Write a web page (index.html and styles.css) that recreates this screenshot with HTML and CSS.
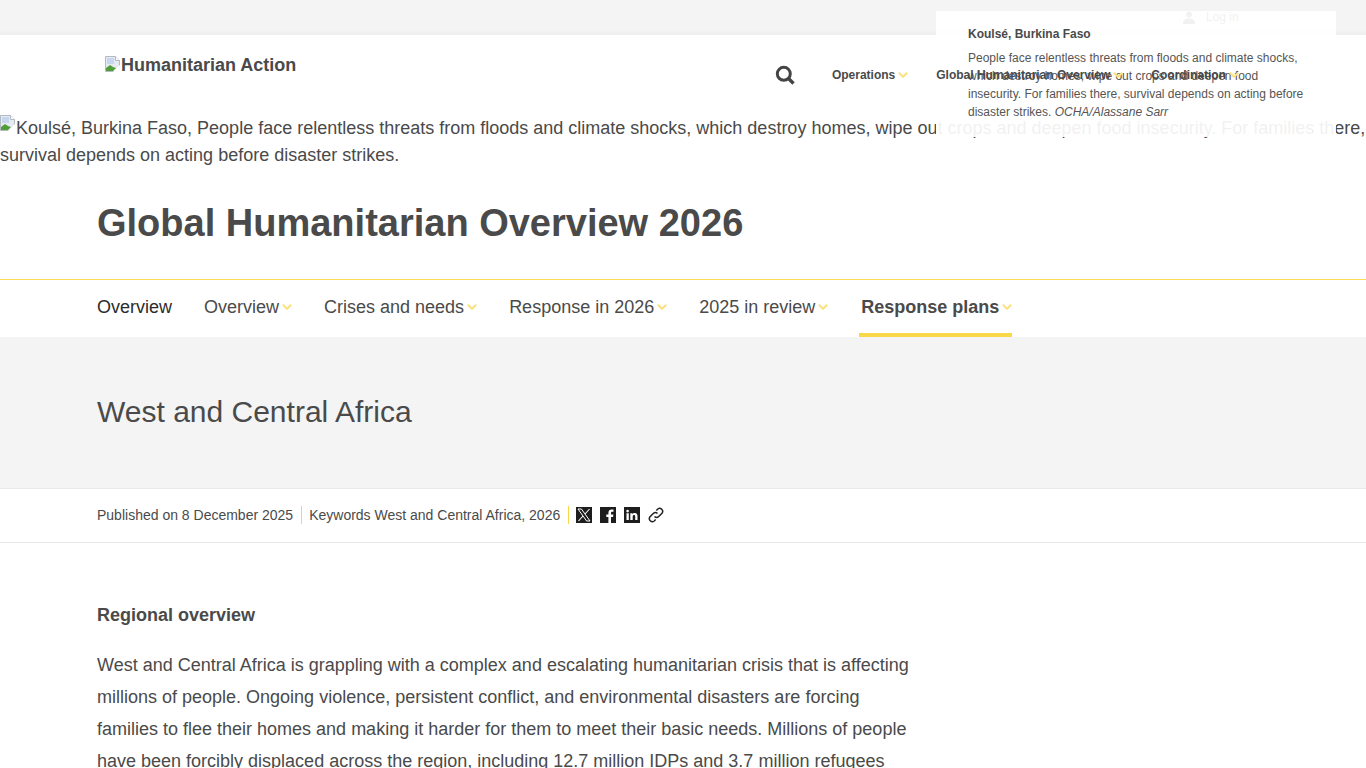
FILE: index.html
```html
<!DOCTYPE html>
<html lang="en">

<head>
    <meta charset="UTF-8" />
    <meta name="viewport" content="width=device-width, initial-scale=1.0" />
    <title>West and Central Africa | Global Humanitarian Overview 2026</title>
    <link rel="stylesheet" href="styles.css">
</head>

<body>
    <svg class="sprite" width="0" height="0" aria-hidden="true">
        <symbol id="broken" viewBox="0 0 16 16">
            <path d="M.5 .5h10l4 4v11H.5z" fill="#e6ebf2" stroke="#b4bac2" />
            <path d="M10.500 .5v4h4" fill="#fff" stroke="#b4bac2" />
            <path d="M2 2h7v6H2z" fill="#c6d6ee" />
            <path d="M1 15V12l4-3 3 2 3 1-3 3z" fill="#4f9e3a" />
            <path d="M16 8l-8 8h8z" fill="#fff" />
        </symbol>
        <symbol id="chevron" viewBox="0 0 10 6">
            <path d="M.8 .8L5 4.800 9.200 .8" fill="none" stroke="#f9e27d" stroke-width="2" />
        </symbol>
    </svg>

    <div class="topbar">
        <a class="login" href="#">
            <svg width="12" height="13" viewBox="0 0 12 13">
                <circle cx="6" cy="3.500" r="3" fill="#555" />
                <path d="M0 13c0-4 2-5.500 6-5.500s6 1.500 6 5.500z" fill="#555" />
            </svg>
            Log in
        </a>
    </div>

    <header class="site-header">
        <a class="logo" href="#"><svg class="broken-icon"><use href="#broken" /></svg>Humanitarian Action</a>
        <nav class="main-nav">
            <svg class="search-icon" width="20" height="20" viewBox="0 0 20 20">
                <circle cx="8.800" cy="8.800" r="6.500" fill="none" stroke="#444" stroke-width="3" />
                <path d="M13.500 13.500l5 5" stroke="#444" stroke-width="3.400" />
            </svg>
            <a href="#">Operations<svg class="chevron"><use href="#chevron" /></svg></a>
            <a href="#">Global Humanitarian Overview<svg class="chevron"><use href="#chevron" /></svg></a>
            <a href="#">Coordination<svg class="chevron"><use href="#chevron" /></svg></a>
        </nav>
    </header>

    <div class="hero-alt"><svg class="broken-icon"><use href="#broken" /></svg>Koulsé, Burkina Faso, People face relentless threats from floods and climate shocks, which destroy homes, wipe out crops and deepen food insecurity. For families there, survival depends on acting before disaster strikes.</div>

    <aside class="caption">
        <h4>Koulsé, Burkina Faso</h4>
        <p>People face relentless threats from floods and climate shocks, which destroy homes, wipe out crops and deepen food insecurity. For families there, survival depends on acting before disaster strikes. <em>OCHA/Alassane Sarr</em></p>
    </aside>

    <div class="page-title">
        <h1>Global Humanitarian Overview 2026</h1>
    </div>

    <nav class="sub-nav">
        <a class="first" href="#">Overview</a>
        <a href="#">Overview<svg class="chevron"><use href="#chevron" /></svg></a>
        <a href="#">Crises and needs<svg class="chevron"><use href="#chevron" /></svg></a>
        <a href="#">Response in 2026<svg class="chevron"><use href="#chevron" /></svg></a>
        <a href="#">2025 in review<svg class="chevron"><use href="#chevron" /></svg></a>
        <a class="active" href="#">Response plans<svg class="chevron"><use href="#chevron" /></svg></a>
    </nav>

    <div class="region-band">
        <h2>West and Central Africa</h2>
    </div>

    <div class="meta-row">
        <span class="meta-item">Published on 8 December 2025</span>
        <span class="meta-item">Keywords West and Central Africa, 2026</span>
        <div class="share">
            <a class="share-box" href="#" aria-label="X">
                <svg width="16" height="16" viewBox="0 0 16 16">
                    <path d="M2 2h3.400l8.600 12h-3.400z" fill="none" stroke="#fff" stroke-width="1" />
                    <path d="M13.500 2L9 7M7 9l-4.500 5" stroke="#fff" stroke-width="1.100" />
                </svg>
            </a>
            <a class="share-box" href="#" aria-label="Facebook">
                <svg width="16" height="16" viewBox="0 0 16 16">
                    <path d="M11 16V10h2l.4-2.500H11V6c0-.8.3-1.300 1.400-1.300h1.100V2.500c-.4 0-1.100-.1-1.800-.1-2 0-3.300 1.200-3.300 3.300v1.800H6.300V10h2.100v6z" fill="#fff" />
                </svg>
            </a>
            <a class="share-box" href="#" aria-label="LinkedIn">
                <svg width="16" height="16" viewBox="0 0 16 16">
                    <path d="M2.500 6.200h2.300V13H2.500zM3.600 2.800a1.300 1.300 0 1 1 0 2.600 1.300 1.300 0 0 1 0-2.600zM6.300 6.200h2.200v1c.4-.7 1.200-1.200 2.300-1.200 2.100 0 2.700 1.300 2.700 3.200V13h-2.300V9.700c0-.9-.2-1.600-1.100-1.600s-1.400.7-1.400 1.600V13H6.300z" fill="#fff" />
                </svg>
            </a>
            <a class="share-link" href="#" aria-label="Copy link">
                <svg width="16" height="16" viewBox="0 0 16 16" fill="none" stroke="#222" stroke-width="1.500">
                    <path d="M6.500 9.500a3 3 0 0 0 4.200 0l3.300-3.300A3 3 0 0 0 9.800 2L8.300 3.500" />
                    <path d="M9.500 6.500a3 3 0 0 0-4.200 0L2 9.800A3 3 0 0 0 6.200 14l1.500-1.500" />
                </svg>
            </a>
        </div>
    </div>

    <main class="content">
        <h3>Regional overview</h3>
        <p>West and Central Africa is grappling with a complex and escalating humanitarian crisis that is affecting millions of people. Ongoing violence, persistent conflict, and environmental disasters are forcing families to flee their homes and making it harder for them to meet their basic needs. Millions of people have been forcibly displaced across the region, including 12.7 million IDPs and 3.7 million refugees</p>
    </main>
</body>

</html>
```

FILE: styles.css
```css
* {
    box-sizing: border-box;
}

html,
body {
    height: 768px;
    overflow: hidden;
}

body {
    margin: 0;
    position: relative;
    font-family: "Liberation Sans", Arial, sans-serif;
    color: #4a4a4a;
    background-color: #fff;
}

a {
    color: inherit;
    text-decoration: none;
}

.sprite {
    position: absolute;
}

.broken-icon {
    width: 16px;
    height: 16px;
    flex-shrink: 0;
}

.chevron {
    width: 10px;
    height: 6px;
    margin-left: 3px;
}

.topbar {
    height: 35px;
    background: linear-gradient(#f4f4f4 85%, #eeeeee);
    display: flex;
    justify-content: flex-end;
    padding: 11px 127px 0 0;
}

.login {
    display: flex;
    gap: 11px;
    font-size: 12px;
    height: 13px;
    line-height: 13px;
    width: 56px;
    white-space: nowrap;
}

/* nav text sits over the caption box */
.site-header {
    position: relative;
    z-index: 2;
    height: 80px;
    display: flex;
    justify-content: space-between;
    padding: 0 127px 0 105px;
}

.logo {
    display: flex;
    align-items: center;
    height: 20px;
    margin-top: 20px;
    font-size: 18px;
    font-weight: bold;
}

.logo .broken-icon {
    margin-top: -3px;
}

.main-nav {
    display: flex;
    align-items: center;
    height: 24px;
    margin-top: 28px;
    font-size: 12px;
    font-weight: bold;
}

.main-nav a {
    display: flex;
    align-items: center;
    margin-left: 28px;
    white-space: nowrap;
}

.search-icon {
    margin-right: 9px;
}

.hero-alt {
    font-size: 18px;
    line-height: 27px;
    height: 56px;
}

.hero-alt .broken-icon {
    vertical-align: 3px;
}

.caption {
    position: absolute;
    z-index: 1;
    top: 11px;
    left: 936px;
    width: 400px;
    height: 126px;
    padding: 14px 32px;
    font-size: 12px;
    line-height: 18px;
    color: #555;
    background-color: rgba(255, 255, 255, 0.92);
}

.caption h4 {
    margin: 0 0 6px;
    font-size: 12px;
    color: #4a4a4a;
}

.caption p {
    margin: 0;
}

.page-title {
    height: 109px;
    padding: 0 97px 4px;
    display: flex;
    align-items: center;
    border-bottom: 1px solid #f5dc50;
}

.page-title h1 {
    margin: 0;
    font-size: 38px;
    line-height: 42px;
}

.sub-nav {
    height: 57px;
    padding: 0 97px;
    display: flex;
    font-size: 18px;
}

.sub-nav a {
    display: flex;
    align-items: center;
    margin-right: 32px;
    border-bottom: 4px solid transparent;
    padding-top: 1px;
    white-space: nowrap;
}

.sub-nav .first {
    color: #2b2b2b;
}

.sub-nav .active {
    font-weight: bold;
    border-bottom-color: #f9d949;
    padding-left: 2px;
    margin-left: -1px;
}

.region-band {
    height: 152px;
    padding: 0 97px 1px;
    display: flex;
    align-items: center;
    background-color: #f4f4f4;
    border-bottom: 1px solid #e8e8e8;
}

.region-band h2 {
    margin: 0;
    font-size: 30px;
    font-weight: normal;
}

.meta-row {
    height: 54px;
    padding: 0 97px 2px;
    display: flex;
    align-items: center;
    font-size: 14px;
    border-bottom: 1px solid #e8e8e8;
}

.meta-item {
    padding-right: 8px;
    margin-right: 7px;
    border-right: 1px solid #f9d949;
    line-height: 18px;
}

.share {
    display: flex;
    gap: 8px;
}

.share-box {
    display: block;
    width: 16px;
    height: 16px;
    background-color: #1d1d1d;
}

.share-box svg,
.share-link svg {
    display: block;
}

.content {
    width: 917px;
    padding: 60px 0 0 97px;
    font-size: 18px;
    line-height: 32px;
}

.content h3 {
    margin: 0 0 22px;
    font-size: 18px;
    line-height: 24px;
}

.content p {
    margin: 0;
}
```
